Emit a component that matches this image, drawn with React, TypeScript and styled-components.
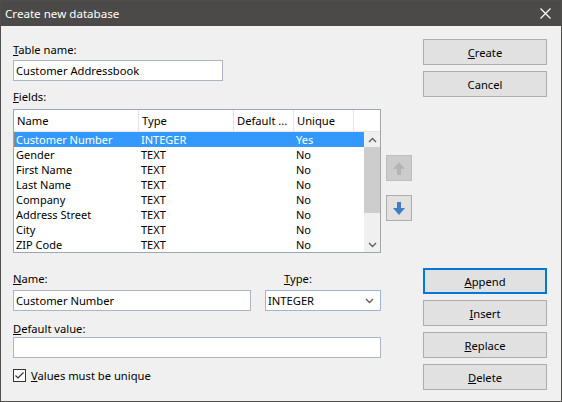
import React from "react";
import styled, { createGlobalStyle } from "styled-components";

const GlobalStyle = createGlobalStyle`
  * { box-sizing: border-box; }
  html, body { margin: 0; padding: 0; background: #f0f0f0; }
  body {
    font-family: "Noto Sans", "Liberation Sans", sans-serif;
    font-size: 11.2px;
    color: #000;
  }
`;

const Window = styled.div`
  width: 562px;
  height: 402px;
  border: 1px solid #4f4e4c;
  background: #f0f0f0;
  display: flex;
  flex-direction: column;
`;

const TitleBar = styled.div`
  height: 25px;
  background: #4b4a48;
  color: #fff;
  display: flex;
  align-items: center;
  justify-content: space-between;
  padding: 0 10px 0 4px;
  font-size: 11.6px;
`;

const CloseIcon = styled.svg`
  width: 11px;
  height: 11px;
`;

const Body = styled.div`
  flex: 1;
  display: flex;
  padding: 13px 14px 0 12px;
`;

const LeftColumn = styled.div`
  display: flex;
  flex-direction: column;
`;

const Label = styled.div<{ $top?: number; $indent?: number }>`
  height: 16px;
  line-height: 16px;
  margin-top: ${(p) => p.$top ?? 0}px;
  padding-left: ${(p) => p.$indent ?? 0}px;
  white-space: nowrap;
`;

const TextBox = styled.div<{ $width: number; $top?: number }>`
  width: ${(p) => p.$width}px;
  height: 21px;
  margin-top: ${(p) => p.$top ?? 0}px;
  background: #fff;
  border: 1px solid #abb5c3;
  padding: 0 3px 0 2px;
  line-height: 19px;
  white-space: nowrap;
  overflow: hidden;
`;

const TableRow = styled.div`
  display: flex;
  margin-top: 4px;
`;

const Table = styled.div`
  width: 368px;
  height: 144px;
  border: 1px solid #9ea6b1;
  background: #fff;
  display: flex;
  flex-direction: column;
`;

const HeaderRow = styled.div`
  display: grid;
  grid-template-columns: 125px 95px 60px 60px 1fr;
  height: 22px;
  background: #fff;
  border-bottom: 1px solid #e5e5e5;
`;

const HeaderCell = styled.div`
  border-right: 1px solid #e5e5e5;
  padding-left: 3px;
  line-height: 21px;
  white-space: nowrap;
  overflow: hidden;
  &:last-child { border-right: none; }
`;

const ListArea = styled.div`
  flex: 1;
  display: flex;
  min-height: 0;
`;

const Rows = styled.div`
  flex: 1;
  display: flex;
  flex-direction: column;
`;

const DataRow = styled.div<{ $selected?: boolean }>`
  display: grid;
  grid-template-columns: 125px 95px 60px 60px 1fr;
  height: 15px;
  line-height: 15px;
  font-size: 11px;
  background: ${(p) => (p.$selected ? "#3399ff" : "transparent")};
  color: ${(p) => (p.$selected ? "#fff" : "#000")};
  outline: ${(p) => (p.$selected ? "1px dotted #d0782a" : "none")};
  outline-offset: -1px;
`;

const DataCell = styled.div`
  padding-left: 2px;
  white-space: nowrap;
  overflow: hidden;
`;

const ScrollBar = styled.div`
  width: 16px;
  background: #f0f0f0;
  display: flex;
  flex-direction: column;
`;

const ScrollArrow = styled.div`
  height: 15px;
  display: flex;
  align-items: center;
  justify-content: center;
`;

const ScrollThumb = styled.div`
  height: 66px;
  background: #cdcdcd;
`;

const ScrollTrack = styled.div`
  flex: 1;
`;

const MoveColumn = styled.div`
  display: flex;
  flex-direction: column;
  gap: 14px;
  margin-left: 5px;
  padding-top: 46px;
`;

const MoveButton = styled.div<{ $disabled?: boolean }>`
  width: 26px;
  height: 26px;
  display: flex;
  align-items: center;
  justify-content: center;
  background: ${(p) => (p.$disabled ? "#cccccc" : "#e1e1e1")};
  border: 1px solid ${(p) => (p.$disabled ? "#bfbfbf" : "#adadad")};
`;

const FormGrid = styled.div`
  display: grid;
  grid-template-columns: 238px 116px;
  column-gap: 14px;
  margin-top: 18px;
`;

const SelectBox = styled.div`
  height: 21px;
  margin-top: 3px;
  background: #fff;
  border: 1px solid #9fb6d3;
  padding: 0 6px 0 2px;
  display: flex;
  align-items: center;
  justify-content: space-between;
`;

const CheckRow = styled.div`
  display: flex;
  align-items: center;
  gap: 5px;
  margin-top: 11px;
  height: 13px;
`;

const CheckBox = styled.div`
  width: 13px;
  height: 13px;
  border: 1px solid #333;
  background: #fff;
  display: flex;
  align-items: center;
  justify-content: center;
`;

const RightColumn = styled.div`
  margin-left: auto;
  width: 124px;
  display: flex;
  flex-direction: column;
`;

const ButtonGroup = styled.div<{ $top?: number }>`
  display: flex;
  flex-direction: column;
  gap: 6px;
  margin-top: ${(p) => p.$top ?? 0}px;
`;

const Button = styled.div<{ $default?: boolean }>`
  height: 26px;
  display: flex;
  align-items: center;
  justify-content: center;
  background: #e1e1e1;
  border: ${(p) => (p.$default ? "2px solid #0078d7" : "1px solid #adadad")};
`;

const Chevron = ({ up }: { up?: boolean }) => (
  <svg width="9" height="6" viewBox="0 0 9 6">
    <polyline
      points={up ? "1,5 4.5,1.5 8,5" : "1,1 4.5,4.5 8,1"}
      fill="none"
      stroke="#606060"
      strokeWidth="1.4"
    />
  </svg>
);

const BlockArrow = ({ up, color }: { up?: boolean; color: string }) => (
  <svg width="12" height="13" viewBox="0 0 12 13">
    <path
      d={up ? "M6 0 L12 7 H8 V13 H4 V7 H0 Z" : "M4 0 H8 V6 H12 L6 13 L0 6 H4 Z"}
      fill={color}
    />
  </svg>
);

const fields = [
  { name: "Customer Number", type: "INTEGER", unique: "Yes" },
  { name: "Gender", type: "TEXT", unique: "No" },
  { name: "First Name", type: "TEXT", unique: "No" },
  { name: "Last Name", type: "TEXT", unique: "No" },
  { name: "Company", type: "TEXT", unique: "No" },
  { name: "Address Street", type: "TEXT", unique: "No" },
  { name: "City", type: "TEXT", unique: "No" },
  { name: "ZIP Code", type: "TEXT", unique: "No" },
];

export default function App() {
  return (
    <>
      <GlobalStyle />
      <Window>
        <TitleBar>
          <span>Create new database</span>
          <CloseIcon viewBox="0 0 11 11">
            <path d="M0.5 0.5 L10.5 10.5 M10.5 0.5 L0.5 10.5" stroke="#fff" strokeWidth="1.2" />
          </CloseIcon>
        </TitleBar>
        <Body>
          <LeftColumn>
            <Label $top={3}>
              <u>T</u>able name:
            </Label>
            <TextBox $width={210} $top={2}>
              Customer Addressbook
            </TextBox>
            <Label $top={8}>
              <u>F</u>ields:
            </Label>
            <TableRow>
              <Table>
                <HeaderRow>
                  <HeaderCell>Name</HeaderCell>
                  <HeaderCell>Type</HeaderCell>
                  <HeaderCell>Default ...</HeaderCell>
                  <HeaderCell>Unique</HeaderCell>
                  <HeaderCell />
                </HeaderRow>
                <ListArea>
                  <Rows>
                    {fields.map((f, i) => (
                      <DataRow key={f.name} $selected={i === 0}>
                        <DataCell>{f.name}</DataCell>
                        <DataCell>{f.type}</DataCell>
                        <DataCell />
                        <DataCell>{f.unique}</DataCell>
                      </DataRow>
                    ))}
                  </Rows>
                  <ScrollBar>
                    <ScrollArrow>
                      <Chevron up />
                    </ScrollArrow>
                    <ScrollThumb />
                    <ScrollTrack />
                    <ScrollArrow>
                      <Chevron />
                    </ScrollArrow>
                  </ScrollBar>
                </ListArea>
              </Table>
              <MoveColumn>
                <MoveButton $disabled>
                  <BlockArrow up color="#b4b4b4" />
                </MoveButton>
                <MoveButton>
                  <BlockArrow color="#3d7fc1" />
                </MoveButton>
              </MoveColumn>
            </TableRow>
            <FormGrid>
              <Label>
                <u>N</u>ame:
              </Label>
              <Label $indent={19}>
                <u>T</u>ype:
              </Label>
              <TextBox $width={238} $top={3}>
                Customer Number
              </TextBox>
              <SelectBox>
                <span>INTEGER</span>
                <Chevron />
              </SelectBox>
            </FormGrid>
            <Label $top={10}>
              <u>D</u>efault value:
            </Label>
            <TextBox $width={368} />
            <CheckRow>
              <CheckBox>
                <svg width="11" height="11" viewBox="0 0 11 11">
                  <polyline points="1.5,5.5 4,8 9.5,2.5" fill="none" stroke="#333" strokeWidth="1.2" />
                </svg>
              </CheckBox>
              <span>
                <u>V</u>alues must be unique
              </span>
            </CheckRow>
          </LeftColumn>
          <RightColumn>
            <ButtonGroup>
              <Button>
                <span>
                  <u>C</u>reate
                </span>
              </Button>
              <Button>Cancel</Button>
            </ButtonGroup>
            <ButtonGroup $top={171}>
              <Button $default>
                <span>
                  <u>A</u>ppend
                </span>
              </Button>
              <Button>
                <span>
                  <u>I</u>nsert
                </span>
              </Button>
              <Button>
                <span>
                  <u>R</u>eplace
                </span>
              </Button>
              <Button>
                <span>
                  <u>D</u>elete
                </span>
              </Button>
            </ButtonGroup>
          </RightColumn>
        </Body>
      </Window>
    </>
  );
}
